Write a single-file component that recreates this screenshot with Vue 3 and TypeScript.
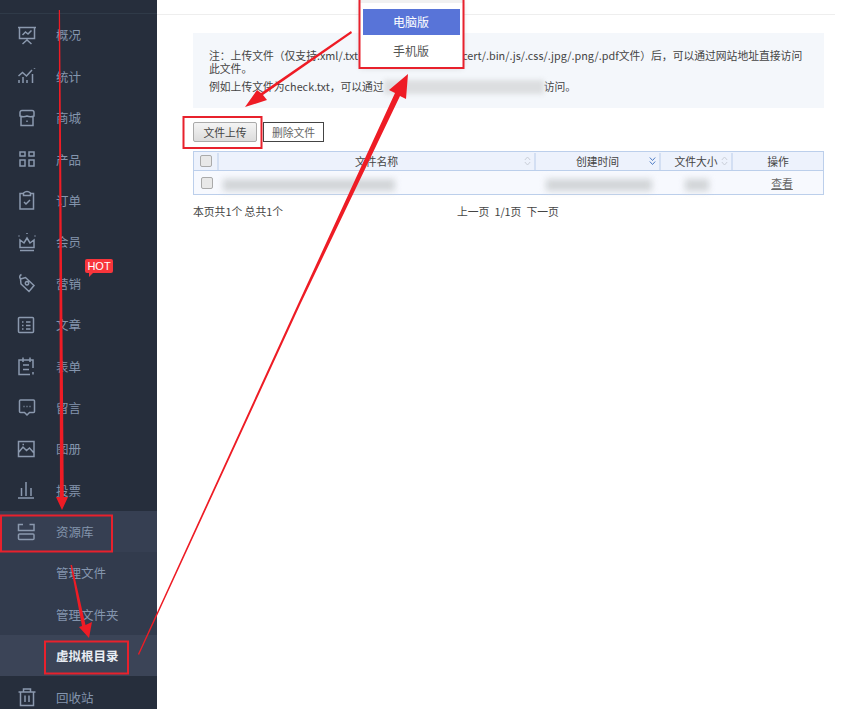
<template>
  <div class="page">
    <!-- 左侧菜单 -->
    <aside class="sidebar">
      <div class="side-top"></div>
      <div
        v-for="item in menu"
        :key="item.name"
        class="menu-item"
        :class="{ group: item.group, sub: item.sub, current: item.current }"
      >
        <svg v-if="item.icon" class="menu-icon" viewBox="0 0 20 20" fill="none" stroke="#8b99ae" stroke-width="1.5">
          <path :d="item.icon" />
        </svg>
        <span class="menu-text">{{ item.name }}</span>
        <span v-if="item.hot" class="hot">HOT</span>
      </div>
    </aside>

    <!-- 主体内容 -->
    <main class="main">
      <div class="main-top"></div>
      <section class="notice">
        <p class="note-first">注：上传文件（仅支持.xml/.txt<span class="covered"></span>cert/.bin/.js/.css/.jpg/.png/.pdf文件）后，可以通过网站地址直接访问此文件。</p>
        <p class="note-second">
          例如上传文件为check.txt，可以通过<span class="blur-url"></span>访问。
        </p>
      </section>

      <div class="actions">
        <button class="btn-upload">文件上传</button>
        <button class="btn-delete">删除文件</button>
      </div>

      <div class="table">
        <div class="row head">
          <div class="cell c-check"><span class="check"></span></div>
          <div class="cell c-name">文件名称
            <svg class="sort" viewBox="0 0 7 10" fill="none" stroke="#c9ced8"><path d="M.8 4L3.500 1l2.700 3M.8 6l2.700 3 2.700-3" /></svg>
          </div>
          <div class="cell c-time">创建时间
            <svg class="sort" viewBox="0 0 7 10" fill="none" stroke="#4f7cc4"><path d="M.8 1.500l2.700 3 2.700-3M.8 5.500l2.700 3 2.700-3" /></svg>
          </div>
          <div class="cell c-size">文件大小
            <svg class="sort" viewBox="0 0 7 10" fill="none" stroke="#c9ced8"><path d="M.8 4L3.500 1l2.700 3M.8 6l2.700 3 2.700-3" /></svg>
          </div>
          <div class="cell c-op">操作</div>
        </div>
        <div class="row body">
          <div class="cell c-check"><span class="check"></span></div>
          <div class="cell c-name left"><span class="blur b-name"></span></div>
          <div class="cell c-time"><span class="blur b-time"></span></div>
          <div class="cell c-size"><span class="blur b-size"></span></div>
          <div class="cell c-op link"><span>查看</span></div>
        </div>
      </div>

      <div class="pager">
        <span class="count">本页共1个 总共1个</span>
        <span>上一页</span>
        <span>1/1页</span>
        <span>下一页</span>
      </div>
    </main>

    <!-- 下拉菜单 -->
    <div class="popup">
      <div class="popup-item on">电脑版</div>
      <div class="popup-item">手机版</div>
    </div>

    <!-- 标注：红框和箭头 -->
    <svg class="marks" viewBox="0 0 860 709" fill="none">
      <g stroke="#e8212c" stroke-width="2">
        <rect x="1" y="515.500" width="111" height="36" />
        <rect x="45" y="641.500" width="83" height="32" />
        <rect x="183.500" y="117" width="78" height="31" />
        <rect x="359.500" y="-2" width="104" height="70" />
      </g>
      <g fill="#ee1c25">
        <polygon points="58.800,10 60,10 63.800,497 68,497 62,510 56,497 60,497" />
        <polygon points="70.500,565 72,565 85.500,625 92,622 89,638 79,627 82,626" />
        <polygon points="138,654 139,655 300,305 400,96 406,99 408,74 389,90 395,93 298,304" />
        <polygon points="351,31 352,33 263,95 267,100 245,107 257,90 261,93" />
      </g>
    </svg>
  </div>
</template>

<script setup lang="ts">
interface MenuItem {
  name: string
  icon?: string
  hot?: boolean
  group?: boolean
  sub?: boolean
  current?: boolean
}

const menu: MenuItem[] = [
  { name: '概况', icon: 'M1 2.500h18M2.500 2.500v11h15v-11M5.500 10l3-3 2.500 2 3.500-3.500M10 13.500v1.500M5.500 19l4.500-4 4.500 4' },
  { name: '统计', icon: 'M2 17v-3M6 17v-6M10 17v-3M15.500 17v-9M1.500 10l4-3.500 4 3.500 5.500-6M17.500 2v.8' },
  { name: '商城', icon: 'M3 8V4.500a2 2 0 0 1 2-2h10a2 2 0 0 1 2 2V8q-3.500 1.500-7 0q-3.500 1.500-7 0zM4 9v8.500h12V9M10 12.500v1.500' },
  { name: '产品', icon: 'M3 3h5v4H3zM12 3h5v4h-5zM3 11h5v6H3zM12 11h5v6h-5z' },
  { name: '订单', icon: 'M6.500 3.500H3v15.500h13.500v-15.500h-3M6.500 5.500V3q3.500-3 7 0v2.500zM7 12l2 2 4-4' },
  { name: '会员', icon: 'M3 8v7.500h14V8l-4 3-3-5-3 5zM3 18.500h14M2 3.500v1M10 1v1M18 3.500v1' },
  { name: '营销', icon: 'M3.500 6l5-1.500 8.500 8-5 6-8-7.500zM3.500 6Q1.500 3 4.500 1.500M10 8.500a1.700 1.700 0 1 1-.01 0z' },
  { name: '文章', icon: 'M2.500 2.500h13a1 1 0 0 1 1 1v13a1 1 0 0 1-1 1h-13a1 1 0 0 1-1-1v-13a1 1 0 0 1 1-1zM5 7h1.500M9 7h4.500M5 10.500h1.500M9 10.500h4.500M5 14h1.500M9 14h4.500' },
  { name: '表单', icon: 'M16 12V4H2v14.500h11M6 1.500v4.500M13 1.500v4.500M6 9h6M6 13.500h6M16 16v2.500' },
  { name: '留言', icon: 'M3.500 3h13a1 1 0 0 1 1 1v10.500a1 1 0 0 1-1 1h-4L10 18l-2.500-2.500h-4a1 1 0 0 1-1-1V4a1 1 0 0 1 1-1zM6.500 9.500h1M9.500 9.500h1M12.500 9.500h1' },
  { name: '图册', icon: 'M1.500 2.500h15.500v15H1.500zM1.500 13.500l4.500-5.500 3.500 3.500 3-2.500 4.500 5M5.500 5.500h1.500' },
  { name: '投票', icon: 'M9 2v14M4.500 8v8M14 8v8M1 18h16' },
  { name: '资源库', icon: 'M6 2.500H1.500v6h15.500v-6h-4.500M2.500 12h13.500a1 1 0 0 1 1 1v3.500a1 1 0 0 1-1 1H2.500a1 1 0 0 1-1-1V13a1 1 0 0 1 1-1z', group: true },
  { name: '管理文件', sub: true },
  { name: '管理文件夹', sub: true },
  { name: '虚拟根目录', sub: true, current: true },
  { name: '回收站', icon: 'M1.500 5h17M6.500 5V2h7v3M3.500 5v13.500h13V5M8 8.500v6.500M12 8.500v6.500' }
]
menu[6].hot = true
</script>

<style scoped>
.page {
  position: relative;
  display: flex;
  width: 860px;
  height: 709px;
  overflow: hidden;
  background: #fff;
  color: #444;
  font-family: "Noto Sans CJK SC", "Noto Sans", sans-serif;
  font-size: 10.8px;
}

.sidebar {
  flex: 0 0 157px;
  height: 709px;
  background: #262e3c;
  overflow: hidden;
}
.side-top {
  height: 14.2px;
  border-bottom: 1px solid #2f3a48;
  box-sizing: border-box;
}
.menu-item {
  position: relative;
  display: flex;
  align-items: center;
  height: 41.4px;
  padding-left: 17px;
  color: #8495ad;
  font-size: 12.5px;
}
.menu-icon {
  flex: none;
  width: 20px;
  height: 20px;
  margin-right: 19px;
}
.menu-text {
  white-space: nowrap;
}
.group {
  background: #363f52;
}
.sub {
  padding-left: 56px;
  background: #323b4d;
}
.current {
  background: #3b4457;
  color: #e9edf3;
  font-weight: 700;
}
.hot {
  position: absolute;
  left: 85px;
  top: -3.200px;
  height: 14px;
  width: 28px;
  border-radius: 2px;
  background: #f8353b;
  color: #fff;
  font-family: "Liberation Sans", sans-serif;
  font-size: 11px;
  line-height: 14px;
  text-align: center;
}
.hot::after {
  content: "";
  position: absolute;
  left: 4px;
  top: 14px;
  border-top: 4px solid #f8353b;
  border-right: 4px solid transparent;
}

.main {
  flex: none;
  width: 678px;
}
.main-top {
  height: 15px;
  border-bottom: 1px solid #eee;
  box-sizing: border-box;
}
.notice {
  width: 631px;
  height: 75px;
  margin: 18px 0 0 36px;
  padding: 16px 21px 0 16px;
  box-sizing: border-box;
  background: #f4f7fb;
  line-height: 13px;
}
.notice p {
  margin: 0;
}
.note-second {
  margin-top: 5px !important;
}
/* 被下拉菜单挡住的那段文字 */
.covered {
  display: inline-block;
  width: 104px;
}
.blur-url {
  display: inline-block;
  width: 160px;
  height: 14px;
  vertical-align: -3px;
  background: #dcdee0;
  filter: blur(2.500px);
}

.actions {
  display: flex;
  gap: 6px;
  margin: 14px 0 0 36px;
}
.actions button {
  height: 20px;
  padding: 0;
  font-family: inherit;
  font-size: 10.8px;
  line-height: 18px;
  color: #444;
}
.btn-upload {
  width: 64px;
  border: 1px solid #aaa;
  border-radius: 2px;
  background: linear-gradient(#f4f4f4, #dcdcdc);
}
.btn-delete {
  width: 61px;
  border: 1px solid #444;
  background: #fff;
  color: #666 !important;
}

.table {
  width: 631px;
  margin: 9px 0 0 36px;
  border: 1px solid #bccfeb;
  box-sizing: border-box;
}
.row {
  display: flex;
  align-items: center;
}
.head {
  height: 18px;
  background: #edf2fc;
  border-bottom: 1px solid #bccfeb;
}
.body {
  height: 23px;
  background: #f7f9fe;
}
.cell {
  position: relative;
  box-sizing: border-box;
  text-align: center;
  line-height: 16px;
}
.head .cell:not(:last-child) {
  height: 17px;
  border-right: 2px solid #d3dff3;
}
.c-check {
  flex: 0 0 25px;
  display: flex;
  align-items: center;
  justify-content: center;
}
.c-name {
  flex: 0 0 317px;
}
.c-time {
  flex: 0 0 125px;
}
.c-size {
  flex: 0 0 72px;
}
.c-op {
  flex: 1;
}
.left {
  text-align: left;
}
.link {
  padding-left: 8px;
  color: #666;
  text-decoration: underline;
}
.check {
  display: block;
  width: 10px;
  height: 10px;
  border: 1px solid #aaa;
  border-radius: 2px;
  background: #e8e8e8;
}
.sort {
  position: absolute;
  right: 3px;
  top: 3px;
  width: 7px;
  height: 10px;
}
.blur {
  display: inline-block;
  height: 12px;
  background: #d2d5d8;
  filter: blur(3px);
  vertical-align: middle;
}
.b-name {
  width: 172px;
  margin-left: 4px;
}
.b-time {
  width: 106px;
}
.b-size {
  width: 24px;
}

.pager {
  display: flex;
  gap: 5px;
  margin: 9px 0 0 36px;
  line-height: 14px;
}
.count {
  width: 259px;
}

.popup {
  position: absolute;
  left: 360px;
  top: 0;
  width: 103px;
  height: 67px;
  padding-top: 6px;
  box-sizing: border-box;
  background: #fff;
  border-top: 3px solid #f1f1f1;
  box-shadow: 0 1px 6px rgba(0, 0, 0, 0.15);
}
.popup-item {
  height: 32px;
  margin: 0 3px;
  color: #555;
  font-size: 12px;
  line-height: 32px;
  text-align: center;
  text-indent: -1px;
}
.popup-item.on {
  height: 26px;
  background: #5874d8;
  color: #fff;
  line-height: 26px;
}
.marks {
  position: absolute;
  left: 0;
  top: 0;
  width: 860px;
  height: 709px;
  pointer-events: none;
}
</style>
